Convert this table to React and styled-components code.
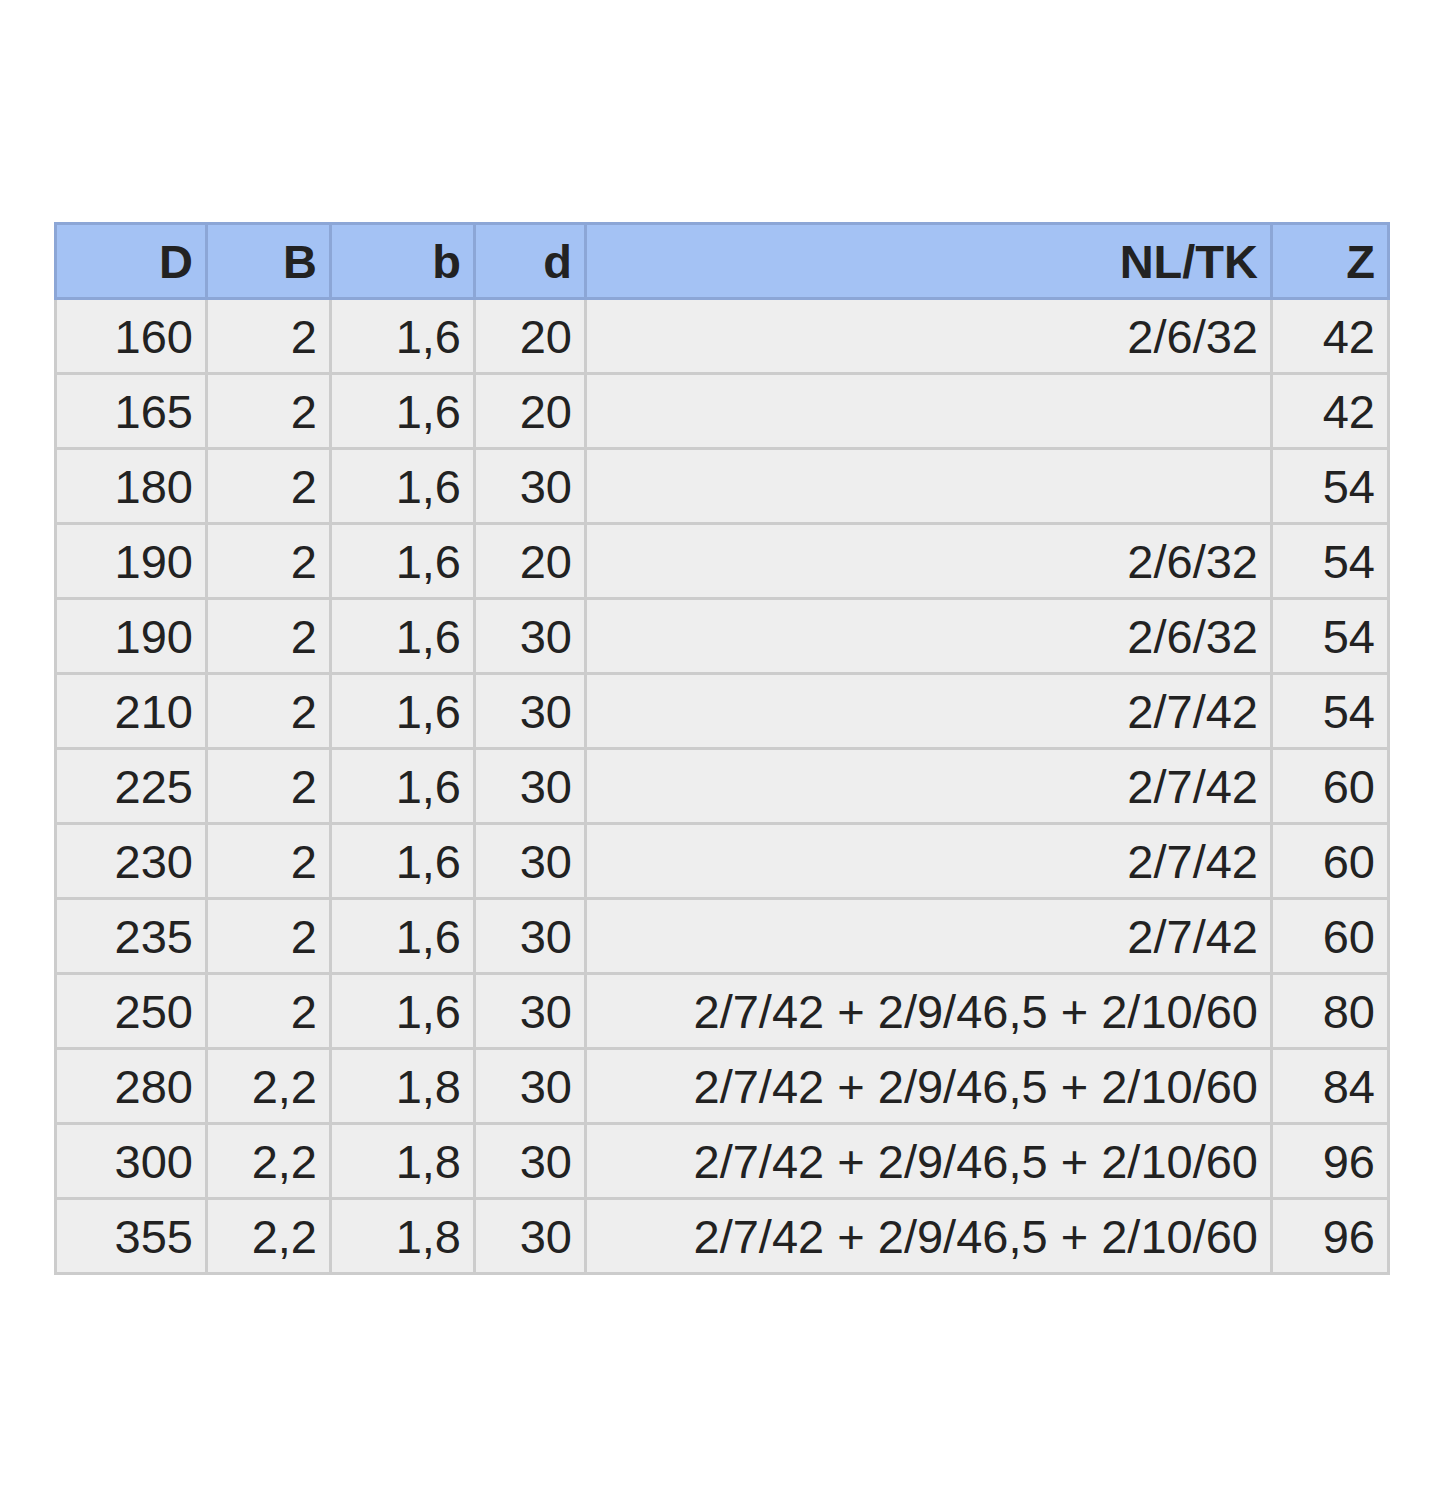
import React from "react";
import styled, { createGlobalStyle } from "styled-components";

const GlobalStyle = createGlobalStyle`
    body {
        margin: 0;
        background: #ffffff;
        font-family: "Liberation Sans", Arial, Helvetica, sans-serif;
    }
`;

const Page = styled.div`
    padding: 222px 55px 0 54px;
`;

const Table = styled.table`
    width: 1333px;
    border-collapse: collapse;
    table-layout: fixed;
    color: #222222;
    font-size: 47px;
`;

const HeadCell = styled.th`
    background-color: #a4c2f4;
    border: 3px solid #8ca6d6;
    height: 72px;
    padding: 0 12px 0 0;
    text-align: right;
    font-weight: bold;
`;

const Cell = styled.td`
    background-color: #eeeeee;
    border: 3px solid #cccccc;
    height: 72px;
    padding: 0 12px 0 0;
    text-align: right;
    white-space: nowrap;
`;

const columns = [
    { key: "D", width: 151 },
    { key: "B", width: 124 },
    { key: "b", width: 144 },
    { key: "d", width: 111 },
    { key: "NL/TK", width: 686 },
    { key: "Z", width: 117 },
];

const combo = "2/7/42 + 2/9/46,5 + 2/10/60";

const rows = [
    ["160", "2", "1,6", "20", "2/6/32", "42"],
    ["165", "2", "1,6", "20", "", "42"],
    ["180", "2", "1,6", "30", "", "54"],
    ["190", "2", "1,6", "20", "2/6/32", "54"],
    ["190", "2", "1,6", "30", "2/6/32", "54"],
    ["210", "2", "1,6", "30", "2/7/42", "54"],
    ["225", "2", "1,6", "30", "2/7/42", "60"],
    ["230", "2", "1,6", "30", "2/7/42", "60"],
    ["235", "2", "1,6", "30", "2/7/42", "60"],
    ["250", "2", "1,6", "30", combo, "80"],
    ["280", "2,2", "1,8", "30", combo, "84"],
    ["300", "2,2", "1,8", "30", combo, "96"],
    ["355", "2,2", "1,8", "30", combo, "96"],
];

const App = () => {
    return (
        <Page>
            <GlobalStyle />
            <Table>
                <colgroup>
                    {columns.map(c => (
                        <col key={c.key} style={{ width: c.width }} />
                    ))}
                </colgroup>
                <thead>
                    <tr>
                        {columns.map(c => (
                            <HeadCell key={c.key}>{c.key}</HeadCell>
                        ))}
                    </tr>
                </thead>
                <tbody>
                    {rows.map((row, i) => (
                        <tr key={i}>
                            {row.map((value, j) => (
                                <Cell key={j}>{value}</Cell>
                            ))}
                        </tr>
                    ))}
                </tbody>
            </Table>
        </Page>
    );
};

export default App;
